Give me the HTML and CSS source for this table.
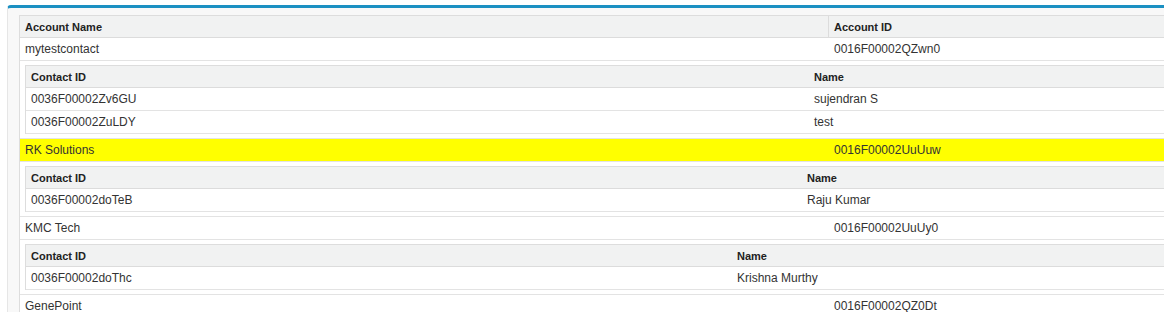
FILE: index.html
```html
<!DOCTYPE html>
<html>
<head>
<meta charset="utf-8">
<link rel="stylesheet" href="styles.css">
</head>
<body>
<div class="panel">
  <table class="grid outer">
    <colgroup><col class="c-acc-name"><col></colgroup>
    <thead>
      <tr><th>Account Name</th><th>Account ID</th></tr>
    </thead>
    <tbody>
      <tr class="acc"><td>mytestcontact</td><td>0016F00002QZwn0</td></tr>
      <tr class="sub">
        <td colspan="2">
          <table class="grid inner">
            <colgroup><col class="c-n1"><col></colgroup>
            <thead><tr><th>Contact ID</th><th>Name</th></tr></thead>
            <tbody>
              <tr><td>0036F00002Zv6GU</td><td>sujendran S</td></tr>
              <tr><td>0036F00002ZuLDY</td><td>test</td></tr>
            </tbody>
          </table>
        </td>
      </tr>
      <tr class="acc hl"><td>RK Solutions</td><td>0016F00002UuUuw</td></tr>
      <tr class="sub">
        <td colspan="2">
          <table class="grid inner">
            <colgroup><col class="c-n2"><col></colgroup>
            <thead><tr><th>Contact ID</th><th>Name</th></tr></thead>
            <tbody>
              <tr><td>0036F00002doTeB</td><td>Raju Kumar</td></tr>
            </tbody>
          </table>
        </td>
      </tr>
      <tr class="acc"><td>KMC Tech</td><td>0016F00002UuUy0</td></tr>
      <tr class="sub">
        <td colspan="2">
          <table class="grid inner">
            <colgroup><col class="c-n3"><col></colgroup>
            <thead><tr><th>Contact ID</th><th>Name</th></tr></thead>
            <tbody>
              <tr><td>0036F00002doThc</td><td>Krishna Murthy</td></tr>
            </tbody>
          </table>
        </td>
      </tr>
      <tr class="acc"><td>GenePoint</td><td>0016F00002QZ0Dt</td></tr>
    </tbody>
  </table>
</div>
</body>
</html>
```
FILE: styles.css
```css
html, body {
  margin: 0;
  padding: 0;
  overflow: hidden;
  background: #ffffff;
}
body {
  font-family: "Liberation Sans", Arial, sans-serif;
  font-size: 12px;
  color: #333333;
}
.panel {
  margin: 5px 0 0 7px;
  height: 307px;
  overflow: hidden;
  background: #f8f8f8;
  border-top: 3px solid #1b90c2;
  border-left: 1px solid #e6e6e6;
  border-top-left-radius: 4px;
  padding: 7px 0 0 11px;
  box-sizing: border-box;
}
.grid {
  border-spacing: 0;
  table-layout: fixed;
  background: #ffffff;
  border-top: 1px solid #dddddd;
  border-left: 1px solid #dddddd;
}
.outer {
  width: 1210px;
}
.inner {
  width: 100%;
}
.c-acc-name { width: 808px; }
.c-n1 { width: 783px; }
.c-n2 { width: 776px; }
.c-n3 { width: 706px; }
.grid th {
  height: 21px;
  padding: 0 5px;
  text-align: left;
  font-size: 11px;
  font-weight: bold;
  color: #222222;
  background: #f1f2f2;
  border-bottom: 1px solid #dcdcdc;
  white-space: nowrap;
}
.outer > thead th + th {
  border-left: 1px solid #dcdcdc;
}
.outer > tbody > tr.acc > td + td {
  padding-left: 6px;
}
.grid td {
  height: 22px;
  padding: 0 5px;
  border-bottom: 1px solid #e3e3e3;
  white-space: nowrap;
  vertical-align: middle;
}
.outer > tbody > tr.sub > td {
  height: auto;
  padding: 4px 0 4px 5px;
}
.acc.hl > td {
  background: #ffff00;
}
```
